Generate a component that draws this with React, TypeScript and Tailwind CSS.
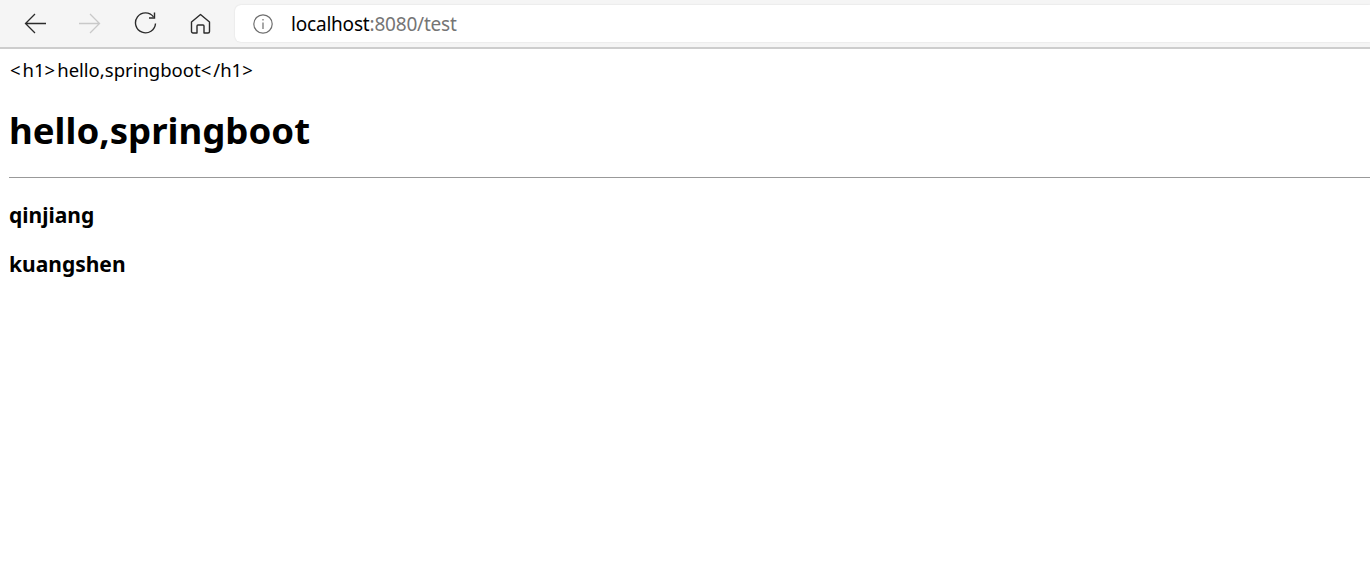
export default function App() {
    return (
        <div className="min-h-[571px] bg-white text-black font-['Noto_Sans','Liberation_Sans',sans-serif]">
            {/* Browser toolbar */}
            <div className="h-[49px] flex bg-[#f5f5f5] border-b-2 border-[#cdcdcd]">
                <div className="w-[235px] shrink-0 flex items-center">
                    <svg className="ml-[24px] w-[23px] h-[23px]" viewBox="0 0 23 23" fill="none" stroke="#2b2b2b" strokeWidth="1.3">
                        <path d="M1.5 11.5H22M11 2 1.5 11.5 11 21" />
                    </svg>
                    <svg className="ml-[31px] w-[23px] h-[23px]" viewBox="0 0 23 23" fill="none" stroke="#c9c9c9" strokeWidth="1.3">
                        <path d="M1 11.5H21.5M12 2l9.5 9.5L12 21" />
                    </svg>
                    <svg className="ml-[33px] w-[23px] h-[23px]" viewBox="0 0 23 23" fill="none" stroke="#2b2b2b" strokeWidth="1.4">
                        <path d="M19.5 4.8A10 10 0 1 0 21.5 11.5" />
                        <path d="M20.5 0.5V6H15" />
                    </svg>
                    <svg className="ml-[33px] w-[21px] h-[21px]" viewBox="0 0 21 21" fill="none" stroke="#2b2b2b" strokeWidth="1.4" strokeLinejoin="round">
                        <path d="M1.5 9 10.5 1.5 19.5 9V18.5a1.5 1.5 0 0 1-1.5 1.5H14V13a1 1 0 0 0-1-1H8a1 1 0 0 0-1 1v7H3a1.5 1.5 0 0 1-1.5-1.5Z" />
                    </svg>
                </div>
                <div className="flex-1 flex items-center h-[37px] mt-[5px] pl-[18px] bg-white rounded-l-[6px] shadow-[0_0_2px_rgba(0,0,0,0.12)]">
                    <svg className="w-[20px] h-[20px]" viewBox="0 0 20 20" fill="none" stroke="#6e6e6e" strokeWidth="1.2">
                        <circle cx="10" cy="10" r="9.2" />
                        <path d="M10 8.5V15M10 5V6.5" />
                    </svg>
                    <span className="ml-[18px] mt-[2px] text-[19px] leading-none tracking-[-0.2px] text-black">
                        localhost<span className="text-[#757575]">:8080/test</span>
                    </span>
                </div>
            </div>

            {/* Page body */}
            <div className="px-[9px]">
                <p className="mt-[8px] pl-px text-[18.5px] leading-[26px]">
                    <span className="tracking-[2px]">&lt;</span>h1<span className="tracking-[2px]">&gt;</span>hello,springboot<span className="tracking-[2px]">&lt;</span>/h1<span className="tracking-[2px]">&gt;</span>
                </p>
                <h1 className="mt-[22px] text-[36.6px] leading-[50px] font-bold">hello,springboot</h1>
            </div>
            <hr className="ml-[9px] mt-[22px] border-t border-[#999]" />
            <div className="px-[9px]">
                <h3 className="mt-[23px] text-[21px] leading-[28px] font-bold">qinjiang</h3>
                <h3 className="mt-[21px] text-[21px] leading-[28px] font-bold">kuangshen</h3>
            </div>
        </div>
    )
}
